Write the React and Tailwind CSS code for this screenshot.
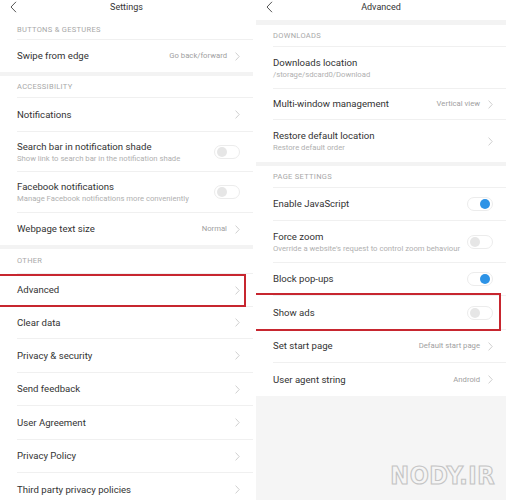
import React from 'react';

const font = { fontFamily: 'Roboto, "Noto Sans", sans-serif' };

function Chevron() {
  return (
    <svg width="5" height="9" viewBox="0 0 5 9">
      <path d="M0.6 0.6 L4.2 4.5 L0.6 8.4" fill="none" stroke="#c9c9c9" strokeWidth="0.9" />
    </svg>
  );
}

function Back() {
  return (
    <svg width="7" height="12" viewBox="0 0 7 12">
      <path d="M6 0.8 L1 6 L6 11.2" fill="none" stroke="#555" strokeWidth="1" />
    </svg>
  );
}

function Toggle({ on }) {
  return (
    <div className="flex h-[14px] w-[26px] items-center rounded-full border border-[#ececec] bg-white px-[2px]">
      <div
        className={
          on
            ? 'ml-auto h-[10px] w-[10px] rounded-full bg-[#2d93e6]'
            : 'h-[10px] w-[10px] rounded-full bg-[#e6e6e6]'
        }
      />
    </div>
  );
}

function Header({ title }) {
  return (
    <div className="relative flex h-[20px] shrink-0 items-center justify-center bg-white">
      <div className="absolute left-[10px] top-[1px]">
        <Back />
      </div>
      <span className="-mt-[4px] text-[9px] text-[#333]">{title}</span>
    </div>
  );
}

function Band({ h = 'h-[4px]' }) {
  return <div className={`shrink-0 bg-[#f3f3f3] ${h}`} />;
}

function Section({ label, h }) {
  return (
    <div className={`ml-[17px] flex shrink-0 items-center border-b border-[#f0f0f0] ${h}`}>
      <span className="text-[7.5px] uppercase tracking-[0.3px] text-[#a8a8a8]">{label}</span>
    </div>
  );
}

function Row({ title, sub, value, toggle, chevron = true, h = 'h-[34px]', mark, last = false }) {
  return (
    <div className={`relative shrink-0 ${h}`}>
      <div
        className={`ml-[17px] flex h-full items-center pr-[13px] ${last ? '' : 'border-b border-[#f0f0f0]'}`}
      >
        <div className="flex min-w-0 flex-1 flex-col">
          <span className="text-[9.6px] leading-[12px] text-[#333]">{title}</span>
          {sub && <span className="mt-[1px] text-[7.7px] leading-[9px] text-[#b0b0b0]">{sub}</span>}
        </div>
        {value && <span className="mr-[8px] text-[7.7px] text-[#a0a0a0]">{value}</span>}
        {toggle !== undefined ? <Toggle on={toggle} /> : chevron && <Chevron />}
      </div>
      {mark && <div className={`absolute border-2 border-[#c7262f] ${mark}`} />}
    </div>
  );
}

function SettingsPanel() {
  return (
    <div className="flex h-[500px] w-[253px] flex-col overflow-hidden bg-white">
      <Header title="Settings" />
      <Section label="Buttons & gestures" h="h-[20px]" />
      <Row title="Swipe from edge" value="Go back/forward" h="h-[32px]" last />
      <Band />
      <Section label="Accessibility" h="h-[22px]" />
      <Row title="Notifications" h="h-[34px]" />
      <Row
        title="Search bar in notification shade"
        sub="Show link to search bar in the notification shade"
        toggle={false}
        h="h-[40px]"
      />
      <Row
        title="Facebook notifications"
        sub="Manage Facebook notifications more conveniently"
        toggle={false}
        h="h-[41px]"
      />
      <Row title="Webpage text size" value="Normal" h="h-[32px]" last />
      <Band />
      <Section label="Other" h="h-[25px]" />
      <Row title="Advanced" h="h-[33px]" mark="inset-y-0 left-[-13px] right-[7px]" />
      <Row title="Clear data" h="h-[32px]" />
      <Row title="Privacy & security" />
      <Row title="Send feedback" h="h-[33px]" />
      <Row title="User Agreement" />
      <Row title="Privacy Policy" h="h-[33px]" />
      <Row title="Third party privacy policies" />
    </div>
  );
}

function AdvancedPanel() {
  return (
    <div className="flex h-[500px] w-[250px] flex-col overflow-hidden bg-[#f5f5f5]">
      <Header title="Advanced" />
      <Band h="h-[5px]" />
      <div className="bg-white">
        <Section label="Downloads" h="h-[22px]" />
        <Row title="Downloads location" sub="/storage/sdcard0/Download" chevron={false} h="h-[42px]" />
        <Row title="Multi-window management" value="Vertical view" h="h-[31px]" />
        <Row title="Restore default location" sub="Restore default order" h="h-[42px]" last />
      </div>
      <Band />
      <div className="bg-white">
        <Section label="Page settings" h="h-[22px]" />
        <Row title="Enable JavaScript" toggle h="h-[33px]" />
        <Row
          title="Force zoom"
          sub="Override a website's request to control zoom behaviour"
          toggle={false}
          h="h-[42px]"
        />
        <Row title="Block pop-ups" toggle h="h-[33px]" />
        <Row title="Show ads" toggle={false} mark="top-[-3px] bottom-[-1px] left-[-14px] right-[5px]" />
        <Row title="Set start page" value="Default start page" h="h-[33px]" />
        <Row title="User agent string" value="Android" h="h-[33px]" last />
      </div>
      <div className="flex flex-1 items-end justify-end pb-[12px] pr-[11px]">
        <span
          className="text-[25px] font-bold leading-none tracking-[0.5px] text-transparent"
          style={{
            fontFamily: '"Liberation Sans Narrow", "DejaVu Sans Condensed", sans-serif',
            WebkitTextStroke: '1.1px #c4c4c4',
          }}
        >
          NODY.IR
        </span>
      </div>
    </div>
  );
}

export default function App() {
  return (
    <div className="flex h-[500px] w-[506px] gap-[3px] bg-white" style={font}>
      <SettingsPanel />
      <AdvancedPanel />
    </div>
  );
}
